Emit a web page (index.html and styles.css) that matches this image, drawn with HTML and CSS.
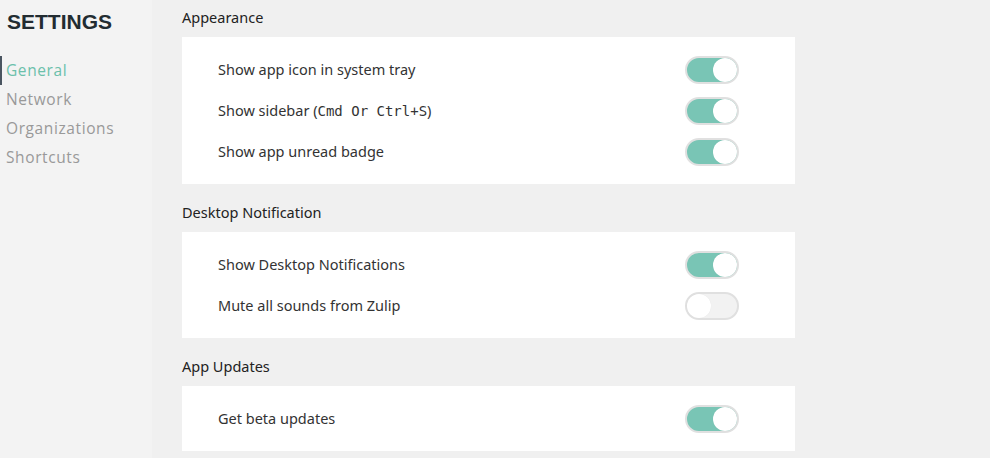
FILE: index.html
```html
<!DOCTYPE html>
<html lang="en">

<head>
  <meta charset="UTF-8">
  <meta name="viewport" content="width=device-width, initial-scale=1.0">
  <title>Settings</title>
  <link rel="stylesheet" href="styles.css">
</head>

<body>
  <div class="layout">
    <div class="sidebar">
      <div class="sidebar-title">SETTINGS</div>
      <div class="nav">
        <div class="nav-item active">General</div>
        <div class="nav-item">Network</div>
        <div class="nav-item">Organizations</div>
        <div class="nav-item">Shortcuts</div>
      </div>
    </div>

    <div class="content">
      <div class="section">
        <div class="section-title">Appearance</div>
        <div class="card">
          <div class="row">
            <div class="label">Show app icon in system tray</div>
            <div class="toggle on"><span class="knob"></span></div>
          </div>
          <div class="row">
            <div class="label">Show sidebar (<code>Cmd Or Ctrl+S</code>)</div>
            <div class="toggle on"><span class="knob"></span></div>
          </div>
          <div class="row">
            <div class="label">Show app unread badge</div>
            <div class="toggle on"><span class="knob"></span></div>
          </div>
        </div>
      </div>

      <div class="section">
        <div class="section-title">Desktop Notification</div>
        <div class="card">
          <div class="row">
            <div class="label">Show Desktop Notifications</div>
            <div class="toggle on"><span class="knob"></span></div>
          </div>
          <div class="row">
            <div class="label">Mute all sounds from Zulip</div>
            <div class="toggle"><span class="knob"></span></div>
          </div>
        </div>
      </div>

      <div class="section">
        <div class="section-title">App Updates</div>
        <div class="card">
          <div class="row">
            <div class="label">Get beta updates</div>
            <div class="toggle on"><span class="knob"></span></div>
          </div>
        </div>
      </div>
    </div>
  </div>
</body>

</html>
```

FILE: styles.css
```css
body {
  margin: 0;
  padding: 0;
  font-family: "Noto Sans", sans-serif;
  background-color: #f0f0f0;
  color: #333;
}

.layout {
  display: flex;
  height: 458px;
  overflow: hidden;
}

.sidebar {
  width: 152px;
  flex-shrink: 0;
  background-color: #f3f3f3;
}

.sidebar-title {
  font-family: "Liberation Sans", Arial, sans-serif;
  font-weight: bold;
  font-size: 21px;
  color: #222c31;
  padding: 9px 0 0 7px;
  line-height: 26px;
}

.nav {
  margin-top: 21px;
}

.nav-item {
  font-family: "Open Sans", sans-serif;
  font-size: 15.5px;
  letter-spacing: 0.6px;
  color: #999;
  line-height: 29px;
  padding-left: 6px;
  border-left: 2px solid transparent;
  margin-left: -2px;
}

.nav-item.active {
  color: #6bc0ab;
  border-left-color: #4a5560;
  margin-left: 0;
  padding-left: 4px;
}

.content {
  flex: 1;
  padding: 7px 0 0 30px;
}

.section {
  width: 613px;
  margin-bottom: 18px;
}

.section-title {
  font-size: 14.5px;
  line-height: 20px;
  color: #222;
  margin-bottom: 10px;
}

.card {
  background: white;
  padding: 12px 56px 12px 36px;
}

.row {
  display: flex;
  align-items: center;
  justify-content: space-between;
  height: 41px;
}

.label {
  font-size: 14.5px;
  padding-bottom: 2px;
}

.label code {
  font-family: "DejaVu Sans Mono", monospace;
  font-size: 14px;
}

/* switch: track with a round knob */
.toggle {
  width: 50px;
  height: 24px;
  border: 2px solid #e0e0e0;
  border-radius: 14px;
  background-color: #f2f2f2;
  display: flex;
  justify-content: flex-start;
}

.toggle.on {
  background-color: #79c5b5;
  justify-content: flex-end;
}

.knob {
  width: 24px;
  height: 24px;
  border-radius: 50%;
  background: white;
  box-shadow: 0 0 1px rgba(0, 0, 0, 0.08);
}
```
